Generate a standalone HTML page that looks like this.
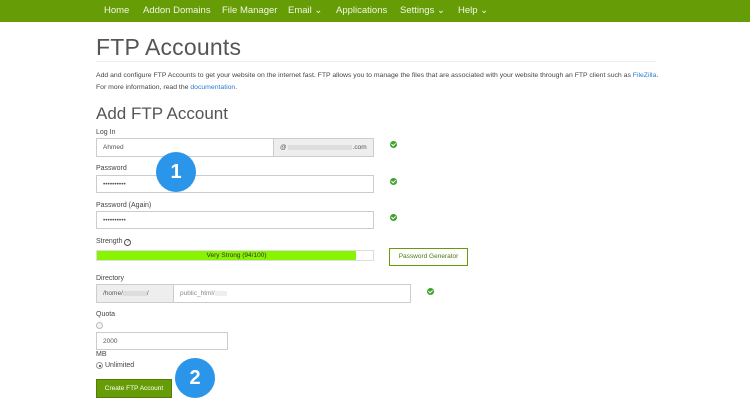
<!DOCTYPE html>
<html><head><style>
*{box-sizing:border-box;margin:0;padding:0}
body{width:750px;height:400px;overflow:hidden;background:#fff;font-family:"Liberation Sans",sans-serif;color:#333;position:relative}
.nav{position:absolute;left:0;top:0;width:750px;height:22px;background:#669c05;color:#f2f7e8;font-size:9.5px}
.nav span{position:absolute;top:5px}
.a{position:absolute}
h1{position:absolute;left:96px;top:34px;font-size:23px;font-weight:normal;color:#555;letter-spacing:.2px}
h2{position:absolute;left:96px;top:104px;font-size:17px;font-weight:normal;color:#555}
.hr{position:absolute;left:96px;top:61px;width:560px;height:1px;background:#eee}
.p{position:absolute;left:96px;font-size:6.85px;color:#444}
.lbl{position:absolute;left:96px;font-size:7px;color:#444}
.in{position:absolute;border:1px solid #ccc;background:#fff;font-size:6.5px;color:#555;padding-left:6px;display:flex;align-items:center}
.gray{background:#eee}
.chk{position:absolute;width:7px;height:7px;border-radius:50%;background:#3ca228}
.chk:after{content:"";position:absolute;left:2px;top:1.3px;width:2px;height:3px;border:solid #fff;border-width:0 1px 1px 0;transform:rotate(45deg)}
.blur{display:inline-block;height:5px;background:#ddd;vertical-align:middle}
.circ{position:absolute;width:40px;height:40px;border-radius:50%;background:#2b95e9;color:#fff;font-weight:bold;font-size:20px;text-align:center;line-height:40px}
a{color:#2a7ccf;text-decoration:none}
</style></head><body>
<div class="nav">
<span style="left:104px">Home</span>
<span style="left:143px">Addon Domains</span>
<span style="left:222px">File Manager</span>
<span style="left:288px">Email ⌄</span>
<span style="left:336px">Applications</span>
<span style="left:400px">Settings ⌄</span>
<span style="left:458px">Help ⌄</span>
</div>
<h1>FTP Accounts</h1>
<div class="hr"></div>
<div class="p" style="top:72px">Add and configure FTP Accounts to get your website on the internet fast. FTP allows you to manage the files that are associated with your website through an FTP client such as <a>FileZilla</a>.</div>
<div class="p" style="top:84px">For more information, read the <a>documentation</a>.</div>
<h2>Add FTP Account</h2>

<div class="lbl" style="top:129px">Log In</div>
<div class="in" style="left:96px;top:138px;width:178px;height:19px">Ahmed</div>
<div class="in gray" style="left:273px;top:138px;width:101px;height:19px">@<span class="blur" style="width:64px;margin:0 1px"></span>.com</div>
<div class="chk" style="left:390px;top:141px"></div>

<div class="lbl" style="top:165px">Password</div>
<div class="in" style="left:96px;top:175px;width:278px;height:18px">••••••••••</div>
<div class="chk" style="left:390px;top:178px"></div>

<div class="lbl" style="top:202px">Password (Again)</div>
<div class="in" style="left:96px;top:211px;width:278px;height:18px">••••••••••</div>
<div class="chk" style="left:390px;top:214px"></div>

<div class="lbl" style="top:238px">Strength <span style="display:inline-block;width:7px;height:7px;border:1px solid #555;border-radius:50%;font-size:5px;line-height:5px;text-align:center">?</span></div>
<div class="a" style="left:96px;top:250px;width:278px;height:11px;border:1px solid #ddd"></div>
<div class="a" style="left:97px;top:251px;width:259px;height:9px;background:#88f400;font-size:6.5px;text-align:center;line-height:9px;color:#333;padding-left:20px">Very Strong (94/100)</div>
<div class="a" style="left:389px;top:248px;width:79px;height:18px;border:1px solid #669c05;font-size:6.5px;color:#4f7a10;text-align:center;line-height:16px">Password Generator</div>

<div class="lbl" style="top:275px">Directory</div>
<div class="in gray" style="left:96px;top:284px;width:78px;height:19px">/home/<span class="blur" style="width:24px"></span>/</div>
<div class="in" style="left:173px;top:284px;width:238px;height:19px;color:#888">public_html/<span class="blur" style="width:12px;background:#eee"></span></div>
<div class="chk" style="left:427px;top:288px"></div>

<div class="lbl" style="top:311px">Quota</div>
<div class="a" style="left:96px;top:322px;width:7px;height:7px;border:1px solid #bbb;border-radius:50%;background:#f4f4f4"></div>
<div class="in" style="left:96px;top:332px;width:132px;height:18px">2000</div>
<div class="lbl" style="top:351px">MB</div>
<div class="a" style="left:96px;top:362px;width:7px;height:7px;border:1px solid #999;border-radius:50%;background:#fff"><div style="margin:1.5px;width:2px;height:2px;border-radius:50%;background:#333"></div></div>
<div class="lbl" style="top:362px;left:105px">Unlimited</div>
<div class="a" style="left:96px;top:379px;width:76px;height:19px;background:#669c05;border:1px solid #507c08;color:#fff;font-size:6.5px;text-align:center;line-height:17px">Create FTP Account</div>

<div class="circ" style="left:156px;top:152px">1</div>
<div class="circ" style="left:175px;top:358px">2</div>
</body></html>
